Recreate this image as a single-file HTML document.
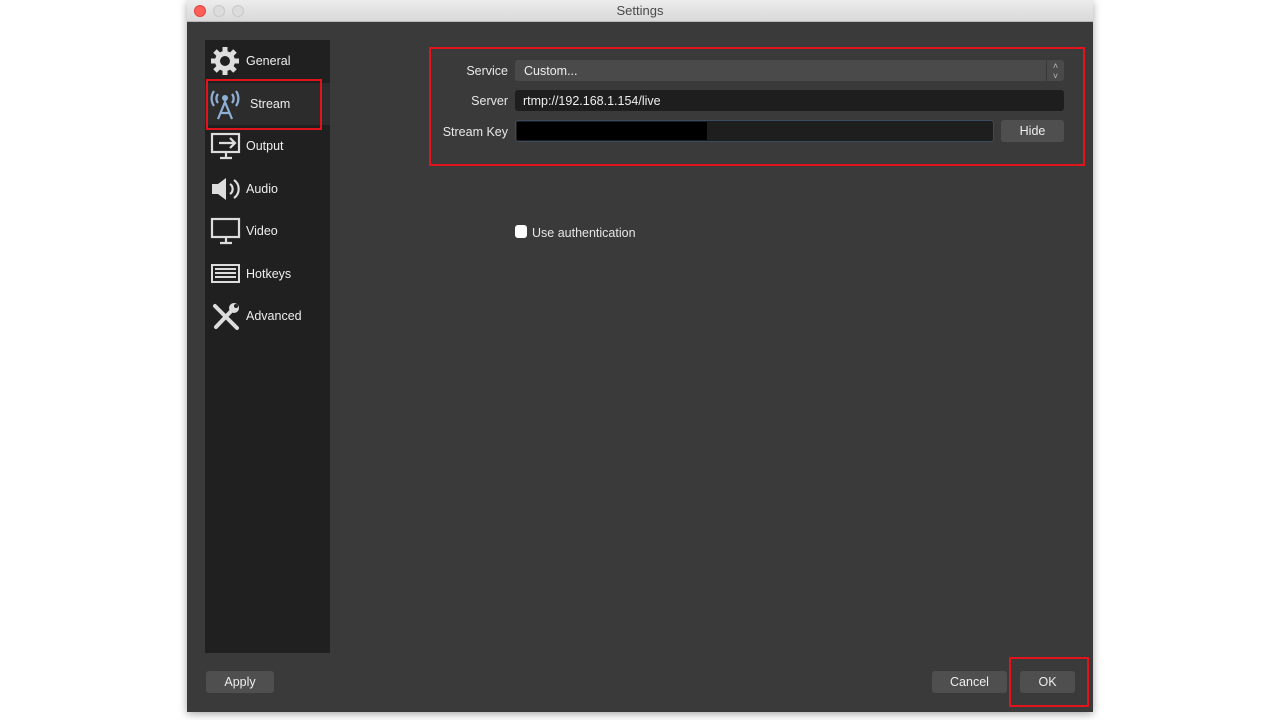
<!DOCTYPE html>
<html><head><style>
*{margin:0;padding:0;box-sizing:border-box}
body{width:1280px;height:720px;background:#fff;position:relative;overflow:hidden;font-family:"Liberation Sans",sans-serif;font-size:12.5px;color:#e6e6e6}
.abs{position:absolute}
.win{left:187px;top:0;width:906px;height:712px;background:#3a3a3a;box-shadow:0 2px 8px rgba(0,0,0,.35)}
.title{left:0;top:0;width:906px;height:22px;background:linear-gradient(#ececec,#d9d9d9);border-bottom:1px solid #b8b8b8;color:#4a4a4a;text-align:center;line-height:22px;font-size:13px}
.dot{top:5px;width:12px;height:12px;border-radius:50%;background:#dcdcdc;border:1px solid #c8c8c8}
.side{left:18px;top:40px;width:125px;height:613px;background:#202020}
.item{left:0;width:125px;height:42px;line-height:43px;padding-left:41px;color:#eee}
.ico{position:absolute;left:5px;top:6px}
.lbl{color:#e8e8e8;text-align:right;width:80px}
.field{background:#1e1e1e;border-radius:3px}
.btn{background:#4f4f4f;border-radius:3px;text-align:center;color:#eee}
.red{border:2px solid #e0141b}
</style></head><body>
<div class="abs win">
 <div class="abs title">Settings</div>
 <div class="abs dot" style="left:7px;background:#fc5f57;border-color:#e0443e"></div>
 <div class="abs dot" style="left:26px"></div>
 <div class="abs dot" style="left:45px"></div>
 <div class="abs side">
  <div class="abs item" style="top:0"><svg class="ico" width="30" height="30" viewBox="0 0 30 30"><g fill="#ddd"><circle cx="15" cy="15" r="10"/><g stroke="#ddd" stroke-width="5"><line x1="15" y1="1" x2="15" y2="29"/><line x1="1" y1="15" x2="29" y2="15"/><line x1="5" y1="5" x2="25" y2="25"/><line x1="25" y1="5" x2="5" y2="25"/></g></g><circle cx="15" cy="15" r="5" fill="#202020"/></svg>General</div>
  <div class="abs item" style="top:43px;background:#2c2c2c;padding-left:45px">Stream<svg class="ico" style="left:3px;top:5px" width="34" height="34" viewBox="0 0 34 34"><g fill="none" stroke="#8fb0d6" stroke-width="2.2"><path d="M6 3a13 13 0 0 0 0 15M28 3a13 13 0 0 1 0 15M10 6a7 7 0 0 0 0 9M24 6a7 7 0 0 1 0 9"/><path d="M10 31L17 14L24 31M12.5 25h9"/></g><circle cx="17" cy="10" r="3" fill="#8fb0d6"/></svg></div>
  <div class="abs item" style="top:85px">Output<svg class="ico" width="32" height="30" viewBox="0 0 32 30"><g fill="none" stroke="#ddd" stroke-width="2.2"><rect x="2" y="3" width="27" height="18"/><path d="M10 27h12M16 21v6M9 12h16M20 7l5 5-5 5"/></g></svg></div>
  <div class="abs item" style="top:128px">Audio<svg class="ico" width="32" height="30" viewBox="0 0 32 30"><path d="M2 10h6l8-6v22l-8-6H2z" fill="#ddd"/><g fill="none" stroke="#ddd" stroke-width="2.2"><path d="M20 10a6 6 0 0 1 0 10M24 6a11 11 0 0 1 0 18"/></g></svg></div>
  <div class="abs item" style="top:170px">Video<svg class="ico" width="32" height="30" viewBox="0 0 32 30"><g fill="none" stroke="#ddd" stroke-width="2.2"><rect x="2" y="3" width="27" height="18"/><path d="M10 27h12M16 21v6"/></g></svg></div>
  <div class="abs item" style="top:213px">Hotkeys<svg class="ico" width="32" height="30" viewBox="0 0 32 30"><rect x="2" y="6" width="27" height="17" fill="none" stroke="#ddd" stroke-width="2"/><g fill="#ddd"><rect x="5" y="9" width="21" height="2"/><rect x="5" y="13" width="21" height="2"/><rect x="5" y="17" width="21" height="2"/></g></svg></div>
  <div class="abs item" style="top:255px">Advanced<svg class="ico" width="32" height="32" viewBox="0 0 32 32"><g stroke="#ddd" stroke-linecap="round"><path d="M5 5L27 27" stroke-width="4"/><path d="M26 5L6 26" stroke-width="4"/></g><circle cx="24" cy="7" r="5" fill="#ddd"/><circle cx="26" cy="5" r="2" fill="#202020"/></svg></div>
 </div>
 <div class="abs red" style="left:19px;top:79px;width:116px;height:51px"></div>

 <div class="abs red" style="left:242px;top:47px;width:656px;height:119px"></div>
 <div class="abs lbl" style="left:241px;top:64px">Service</div>
 <div class="abs" style="left:328px;top:60px;width:549px;height:21px;background:#4a4a4a;border-radius:3px;padding:4px 9px;color:#eee">Custom...<div class="abs" style="right:0;top:0;width:18px;height:21px;border-left:1px solid #3a3a3a;font-size:9px;color:#bbb;text-align:center;line-height:10px;padding-top:1px">˄<br>˅</div></div>
 <div class="abs lbl" style="left:241px;top:94px">Server</div>
 <div class="abs field" style="left:328px;top:90px;width:549px;height:21px;padding:4px 8px;color:#eee">rtmp://192.168.1.154/live</div>
 <div class="abs lbl" style="left:241px;top:125px">Stream Key</div>
 <div class="abs field" style="left:328px;top:120px;width:479px;height:22px;border:1px solid #3c4a60"><div style="width:190px;height:18px;background:#000;margin:1px"></div></div>
 <div class="abs btn" style="left:814px;top:120px;width:63px;height:22px;line-height:23px">Hide</div>

 <div class="abs" style="left:328px;top:225px;width:12px;height:13px;background:#fff;border-radius:3px"></div>
 <div class="abs" style="left:345px;top:226px">Use authentication</div>

 <div class="abs btn" style="left:19px;top:671px;width:68px;height:22px;line-height:23px">Apply</div>
 <div class="abs btn" style="left:745px;top:671px;width:75px;height:22px;line-height:23px">Cancel</div>
 <div class="abs btn" style="left:833px;top:671px;width:55px;height:22px;line-height:23px">OK</div>
 <div class="abs red" style="left:822px;top:657px;width:80px;height:50px"></div>
</div>
</body></html>
